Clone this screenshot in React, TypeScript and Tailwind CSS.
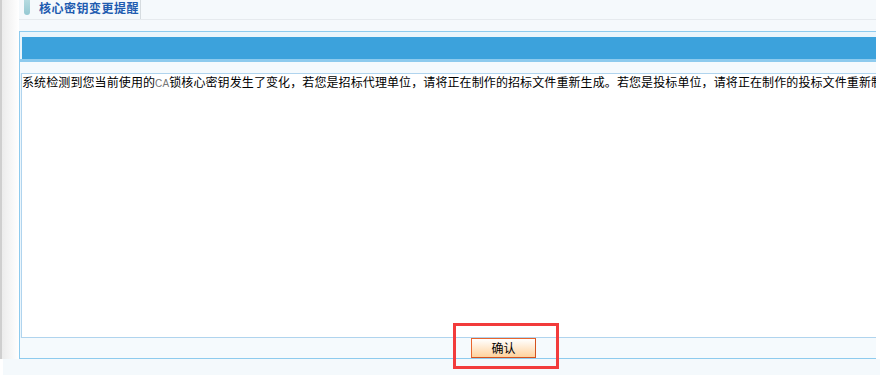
import React from 'react';

const font = { fontFamily: '"Noto Sans CJK SC", "Liberation Sans", sans-serif' };

const App = () => {
  return (
    <div className="relative w-[880px] h-[375px] overflow-hidden bg-white text-[12px] text-black" style={font}>
      <div className="flex h-[359px]">
        {/* left shadow strip */}
        <div className="w-[19px] shrink-0 border-l-2 border-[#cfcfcf] bg-gradient-to-r from-[#ececec] to-white"></div>

        {/* main column */}
        <div className="w-[857px] shrink-0 overflow-hidden bg-[#f5f9fc]">
          {/* title row */}
          <div className="flex h-[20px] border-b border-[#e6eaee]">
            <div className="ml-[5px] h-[15px] w-[6px] rounded-b-[3px] bg-gradient-to-b from-[#b5dbe0] to-[#94c8d2]"></div>
            <div className="ml-[9px] h-[19px] border-r border-[#d6dce0] pr-[1px] text-[12px] font-bold leading-[15px] tracking-[0.5px] text-[#1e5cb0]">
              核心密钥变更提醒
            </div>
          </div>

          <div className="h-[11px]"></div>

          {/* dialog box */}
          <div className="w-[900px] border border-[#8ecbee] bg-[#eaf5fc]">
            <div className="h-[5px]"></div>
            <div className="ml-[2px] h-[22px] bg-[#3ca2dc]"></div>
            <div className="h-[3px] bg-[#8ecbee]"></div>
            <div className="h-[11px] bg-[#f5fafd]"></div>

            <div className="ml-[1px] h-[265px] overflow-hidden whitespace-nowrap border-y border-l border-[#b0d4ee] bg-white leading-[16px] tracking-[0.1px]">
              系统检测到您当前使用的<span className="text-[10px] text-[#777]" style={{ fontFamily: '"Liberation Sans", sans-serif' }}>CA</span>锁核心密钥发生了变化，若您是招标代理单位，请将正在制作的招标文件重新生成。若您是投标单位，请将正在制作的投标文件重新制作。
            </div>

            <div className="flex h-[20px] bg-[#f5fafd] pl-[451px]">
              <button className="h-[20px] w-[65px] border border-[#e8652e] border-r-[#d4521e] border-b-[#d4521e] bg-gradient-to-b from-white to-[#ffd29c] text-[12px] leading-[18px] text-black">
                确认
              </button>
            </div>
          </div>
        </div>
      </div>

      <div className="ml-[3px] h-[16px] bg-[#f4f9fc]"></div>

      {/* red annotation frame */}
      <div className="absolute left-[453px] top-[323px] h-[46px] w-[106px] border-[3px] border-[#f23b3b]"></div>
    </div>
  );
};

export default App;
